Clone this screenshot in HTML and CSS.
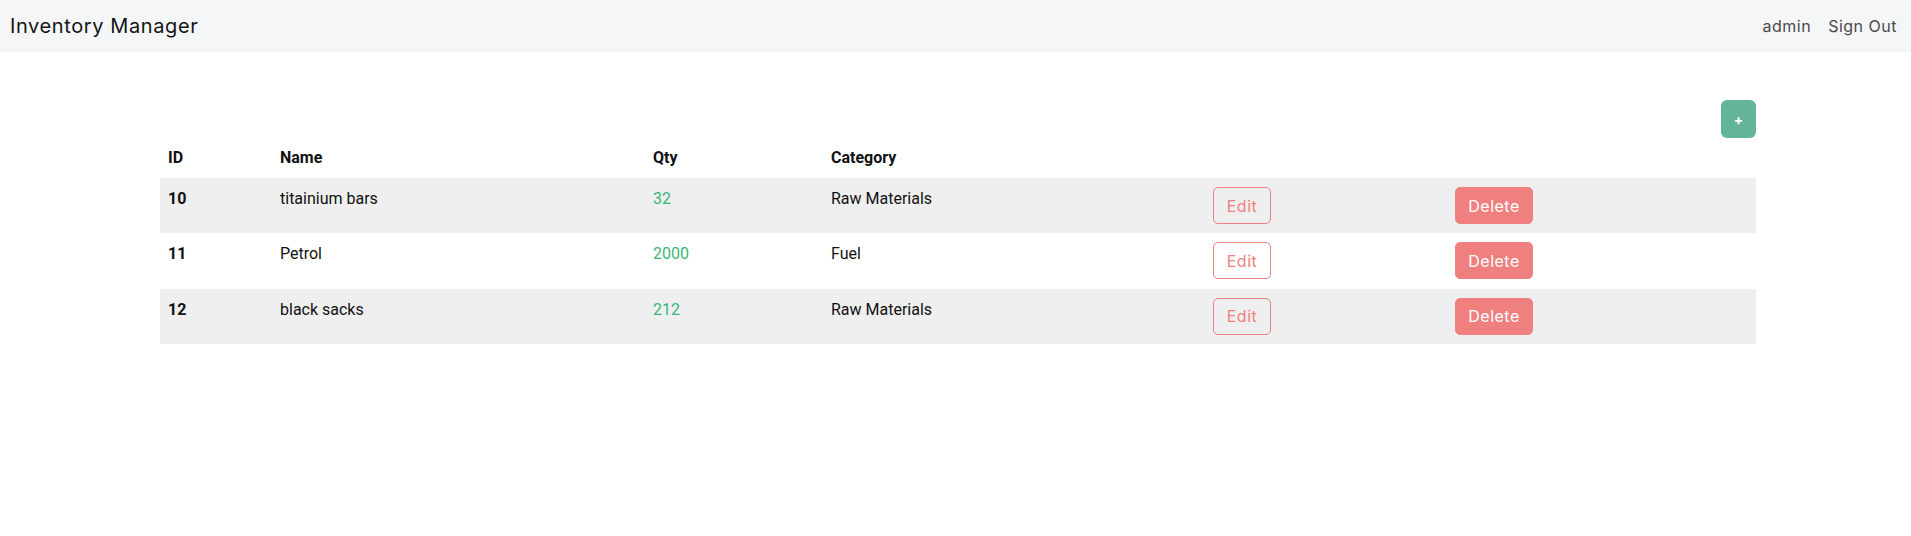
FILE: index.html
```html
<!DOCTYPE html>
<html lang="en">
<head>
<meta charset="utf-8">
<title>Inventory Manager</title>
<link rel="stylesheet" href="styles.css">
</head>
<body>
<nav class="navbar">
  <span class="brand">Inventory Manager</span>
  <div class="nav-links">
    <a class="nav-link">admin</a>
    <a class="nav-link">Sign Out</a>
  </div>
</nav>
<main class="container">
  <div class="toolbar">
    <button class="btn-add">+</button>
  </div>
  <table class="inv-table">
    <thead>
      <tr>
        <th class="c-id">ID</th>
        <th class="c-name">Name</th>
        <th class="c-qty">Qty</th>
        <th class="c-cat">Category</th>
        <th class="c-edit"></th>
        <th class="c-del"></th>
      </tr>
    </thead>
    <tbody>
      <tr class="odd">
        <td class="id">10</td>
        <td>titainium bars</td>
        <td class="qty">32</td>
        <td>Raw Materials</td>
        <td><button class="btn-edit">Edit</button></td>
        <td><button class="btn-del">Delete</button></td>
      </tr>
      <tr>
        <td class="id">11</td>
        <td>Petrol</td>
        <td class="qty">2000</td>
        <td>Fuel</td>
        <td><button class="btn-edit">Edit</button></td>
        <td><button class="btn-del">Delete</button></td>
      </tr>
      <tr class="odd">
        <td class="id">12</td>
        <td>black sacks</td>
        <td class="qty">212</td>
        <td>Raw Materials</td>
        <td><button class="btn-edit">Edit</button></td>
        <td><button class="btn-del">Delete</button></td>
      </tr>
    </tbody>
  </table>
</main>
</body>
</html>
```

FILE: styles.css
```css
* { box-sizing: border-box; }

body {
  margin: 0;
  background: #ffffff;
  font-family: "Roboto", "Liberation Sans", sans-serif;
  color: #111;
}

.navbar {
  height: 52px;
  background: #f5f6f8;
  display: flex;
  align-items: center;
  justify-content: space-between;
  padding: 0 14px 0 10px;
  font-family: "Inter", "Open Sans", sans-serif;
}

.brand {
  font-size: 20px;
  color: #141414;
  letter-spacing: 0.6px;
}

.nav-links {
  display: flex;
  gap: 17px;
}

.nav-link {
  font-size: 16px;
  color: #4a4a4a;
  letter-spacing: 0.5px;
}

.container {
  width: 1596px;
  margin: 48px auto 0 160px;
}

.toolbar {
  display: flex;
  justify-content: flex-end;
}

.btn-add {
  width: 35px;
  height: 38px;
  border: none;
  border-radius: 6px;
  background: #64b49b;
  color: #fff;
  font-family: "Inter", sans-serif;
  font-weight: 700;
  font-size: 14px;
  padding: 0;
}

.inv-table {
  width: 1596px;
  border-collapse: collapse;
  table-layout: fixed;
  font-size: 16px;
}

.inv-table th {
  text-align: left;
  font-weight: 700;
  padding: 8px 8px;
  line-height: 24px;
  vertical-align: bottom;
}

.inv-table td {
  padding: 9px 8px;
  line-height: 24px;
  vertical-align: top;
  height: 55.4px;
}

.c-id { width: 112px; }
.c-name { width: 373px; }
.c-qty { width: 178px; }
.c-cat { width: 382px; }
.c-edit { width: 242px; }
.c-del { width: 309px; }

.odd { background: #efefef; }

.id { font-weight: 700; }

.qty { color: #3cb678; }

.btn-edit, .btn-del {
  height: 37px;
  border-radius: 5px;
  font-family: "Inter", "Open Sans", sans-serif;
  font-size: 16px;
  letter-spacing: 0.5px;
  padding: 0;
  display: block;
}

.btn-edit {
  width: 58px;
  background: transparent;
  border: 1px solid #f08080;
  color: #f08080;
}

.btn-del {
  width: 78px;
  background: #f08080;
  border: 1px solid #f08080;
  color: #fff;
}
```
